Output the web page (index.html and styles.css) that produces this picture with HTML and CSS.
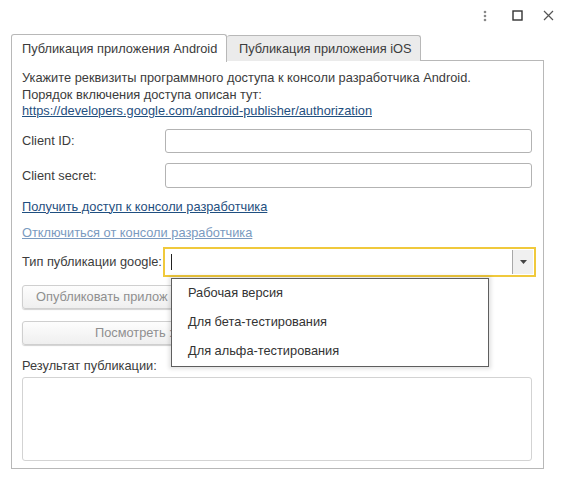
FILE: index.html
```html
<!DOCTYPE html>
<html lang="ru">
<head>
<meta charset="utf-8">
<link rel="stylesheet" href="styles.css">
</head>
<body>
<div class="window">
  <div class="titlebar">
    <span class="tb-icon tb-more">
      <svg width="4" height="12" viewBox="0 0 4 12"><circle cx="2" cy="2" r="1.3" fill="#888"/><circle cx="2" cy="6" r="1.3" fill="#888"/><circle cx="2" cy="10" r="1.3" fill="#888"/></svg>
    </span>
    <span class="tb-icon tb-max">
      <svg width="11" height="11" viewBox="0 0 11 11"><rect x="1" y="1" width="9" height="9" fill="none" stroke="#333" stroke-width="1.4"/></svg>
    </span>
    <span class="tb-icon tb-close">
      <svg width="11" height="11" viewBox="0 0 11 11"><path d="M1 1 L10 10 M10 1 L1 10" stroke="#555" stroke-width="1.2"/></svg>
    </span>
  </div>
  <div class="tabs">
    <div class="tab tab-active">Публикация приложения Android</div>
    <div class="tab">Публикация приложения iOS</div>
  </div>
  <div class="panel">
    <div class="intro">
      <div>Укажите реквизиты программного доступа к консоли разработчика Android.</div>
      <div>Порядок включения доступа описан тут:</div>
      <a class="link" href="#">https://developers.google.com/android-publisher/authorization</a>
    </div>
    <div class="field field-id">
      <span class="label">Client ID:</span>
      <div class="input"></div>
    </div>
    <div class="field field-secret">
      <span class="label">Client secret:</span>
      <div class="input"></div>
    </div>
    <a class="link link-get" href="#">Получить доступ к консоли разработчика</a>
    <a class="link link-off" href="#">Отключиться от консоли разработчика</a>
    <div class="field field-type">
      <span class="label">Тип публикации google:</span>
      <div class="combo">
        <div class="combo-text"><span class="caret"></span></div>
        <div class="combo-btn">
          <svg width="7" height="4" viewBox="0 0 7 4"><path d="M0 0 H7 L3.5 4 Z" fill="#444"/></svg>
        </div>
      </div>
    </div>
    <div class="btn btn-publish"><span>Опубликовать прилож</span></div>
    <div class="btn btn-view"><span>Посмотреть :</span></div>
    <div class="result-label">Результат публикации:</div>
    <div class="textarea"></div>
  </div>
  <div class="dropdown">
    <div class="dd-item">Рабочая версия</div>
    <div class="dd-item">Для бета-тестирования</div>
    <div class="dd-item">Для альфа-тестирования</div>
  </div>
</div>
</body>
</html>
```

FILE: styles.css
```css
* { box-sizing: border-box; }
html, body { margin: 0; padding: 0; background: #fff; }
body {
  font-family: "Liberation Sans", Arial, sans-serif;
  font-size: 12.8px;
  color: #3c3c3c;
}
.window {
  position: relative;
  width: 563px;
  height: 483px;
}
.titlebar {
  height: 34px;
  display: flex;
  justify-content: flex-end;
  align-items: flex-start;
  padding-top: 10px;
  padding-right: 9px;
}
.tb-icon {
  display: flex;
  align-items: center;
  justify-content: center;
  height: 11px;
}
.tb-more { width: 4px; height: 12px; margin-right: 25px; }
.tb-max { width: 11px; margin-right: 20px; }
.tb-close { width: 11px; }

.tabs {
  display: flex;
  margin-left: 11px;
  height: 27px;
  position: relative;
  z-index: 1;
}
.tab {
  height: 26px;
  margin-top: 1px;
  padding: 0 11px 0 12px;
  border: 1px solid #b8b8b8;
  border-bottom: none;
  border-radius: 3px 3px 0 0;
  background: #ebebeb;
  line-height: 25px;
  color: #3c3c3c;
  white-space: nowrap;
}
.tab-active {
  width: 216px;
  height: 28px;
  margin-top: 0;
  padding-left: 10px;
  background: #fff;
  line-height: 27px;
}
.tab + .tab { border-left: none; width: 194px; }

.panel {
  width: 533px;
  height: 409px;
  margin-left: 11px;
  margin-top: -1px;
  border: 1px solid #b8b8b8;
  padding: 9px 11px 0 10px;
  display: flex;
  flex-direction: column;
}
.intro {
  line-height: 16.5px;
  display: flex;
  flex-direction: column;
  align-items: flex-start;
}
.link {
  color: #1f4f80;
  text-decoration: underline;
  align-self: flex-start;
}
.field {
  display: flex;
  align-items: center;
}
.label {
  width: 143px;
  flex: none;
  white-space: nowrap;
}
.field-id { margin-top: 9px; height: 24px; }
.field-secret { margin-top: 10px; height: 25px; }
.input {
  flex: 1;
  height: 100%;
  border: 1px solid #b3b3b3;
  border-radius: 3px;
  background: #fff;
}
.link-get { margin-top: 11px; line-height: 16px; }
.link-off { margin-top: 10px; line-height: 16px; color: #7a9ac0; }
.field-type { margin-top: 6px; height: 30px; }
.field-type .label { width: 141px; }
.combo {
  flex: none;
  width: 373px;
  height: 30px;
  border: 2px solid #f0c93c;
  display: flex;
  padding: 1px;
}
.combo-text {
  flex: 1;
  display: flex;
  align-items: center;
  padding-left: 5px;
}
.caret {
  width: 1px;
  height: 16px;
  background: #222;
}
.combo-btn {
  width: 21px;
  border-left: 1px solid #a8a8a8;
  background: #f0f0f0;
  display: flex;
  align-items: center;
  justify-content: center;
}
.btn {
  height: 24px;
  width: 154px;
  border: 1px solid #cfcfcf;
  border-radius: 3px;
  background: linear-gradient(#fdfdfd, #efefef);
  box-shadow: 0 1px 1px rgba(0,0,0,0.18);
  color: #8f8f8f;
  line-height: 22px;
  white-space: nowrap;
  overflow: hidden;
}
.btn-publish { margin-top: 8px; padding-left: 13px; }
.btn-view { margin-top: 12px; padding-left: 72px; }
.result-label { margin-top: 13px; line-height: 16px; }
.textarea {
  margin-top: 3px;
  height: 84px;
  border: 1px solid #d3d3d3;
  border-radius: 3px;
}

.dropdown {
  position: absolute;
  left: 171px;
  top: 278px;
  width: 318px;
  height: 89px;
  background: #fff;
  border: 1px solid #5e5e5e;
  box-shadow: 0 0 4px 2px rgba(0,0,0,0.12);
  padding-top: 0;
  z-index: 5;
}
.dd-item {
  height: 29px;
  line-height: 27px;
  padding-left: 16px;
  color: #333;
}
```
